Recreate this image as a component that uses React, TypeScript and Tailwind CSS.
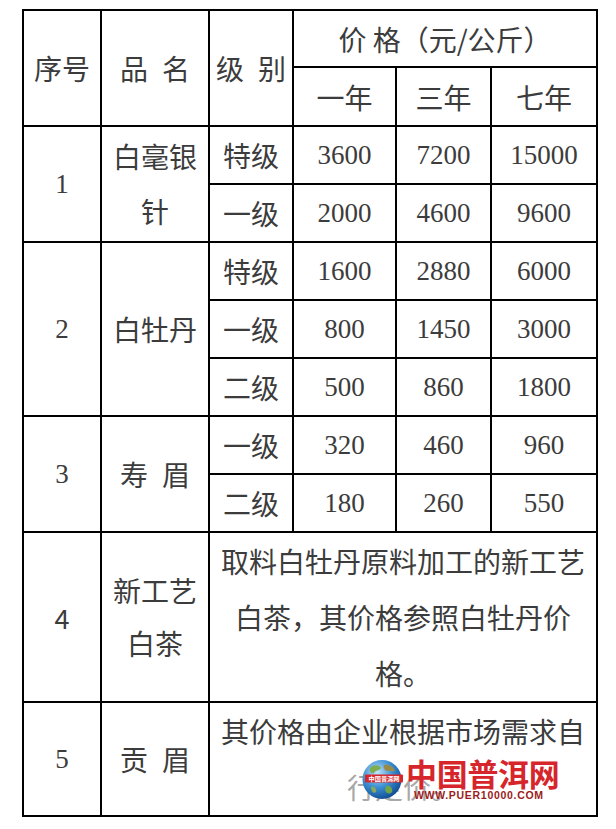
import React from "react";

const cjk = { fontFamily: '"Noto Sans CJK SC", "Noto Sans", sans-serif' };

function Globe() {
  return (
    <svg width="42" height="41" viewBox="0 0 42 41">
      <defs>
        <radialGradient id="gl" cx="38%" cy="32%" r="70%">
          <stop offset="0" stopColor="#bfe4fb" />
          <stop offset="0.55" stopColor="#3b8fd3" />
          <stop offset="1" stopColor="#124f95" />
        </radialGradient>
      </defs>
      <circle cx="20" cy="20.5" r="19.5" fill="url(#gl)" />
      <path d="M8 9 C12 5 17 6 19 9 C17 12 13 11 12 14 C10 15 7 13 8 9 Z" fill="#7fae4e" />
      <path d="M22 6 C27 5 32 8 33 12 C30 13 27 11 24 12 C22 10 21 8 22 6 Z" fill="#9a8a4a" />
      <path d="M24 27 C28 26 31 29 30 33 C27 36 24 34 23 31 Z" fill="#6fa447" />
      <path d="M9 28 C12 27 15 29 14 33 C12 35 9 33 9 28 Z" fill="#8aa85a" />
      <rect x="3" y="15.5" width="38" height="8" rx="1" fill="#d7262b" />
      <text x="22" y="21.8" textAnchor="middle" fontSize="6.2" fontWeight="700" fill="#ffffff" style={cjk}>
        中国普洱网
      </text>
    </svg>
  );
}

export default function App() {
  const td = "border-2 border-black text-center align-middle p-0";
  const zh = "text-[28px] text-[#3c3c3c] font-normal";
  const num = "text-[27px] text-[#3c3c3c] font-['Liberation_Serif','DejaVu_Serif',serif]";

  const priceRow = (lvl: string, a: string, b: string, c: string) => (
    <>
      <td className={`${td} ${zh} h-[58px]`}>{lvl}</td>
      <td className={`${td} ${num}`}>{a}</td>
      <td className={`${td} ${num}`}>{b}</td>
      <td className={`${td} ${num}`}>{c}</td>
    </>
  );

  return (
    <div className="relative w-[616px] h-[829px] bg-white pt-[9px] pl-[22px]" style={cjk}>
      <table className="border-collapse table-fixed w-[576px] leading-none">
        <colgroup>
          <col className="w-[78px]" />
          <col className="w-[108px]" />
          <col className="w-[84px]" />
          <col className="w-[103px]" />
          <col className="w-[95px]" />
          <col className="w-[106px]" />
        </colgroup>
        <tbody>
          <tr>
            <td rowSpan={2} className={`${td} ${zh}`}>序号</td>
            <td rowSpan={2} className={`${td} ${zh}`}>品{"\u2002"}名</td>
            <td rowSpan={2} className={`${td} ${zh}`}>级{"\u2002"}别</td>
            <td colSpan={3} className={`${td} ${zh} h-[57px]`}>价 格（元/公斤）</td>
          </tr>
          <tr>
            <td className={`${td} ${zh} h-[59px]`}>一年</td>
            <td className={`${td} ${zh}`}>三年</td>
            <td className={`${td} ${zh}`}>七年</td>
          </tr>
          <tr>
            <td rowSpan={2} className={`${td} ${num}`}>1</td>
            <td rowSpan={2} className={`${td} ${zh} leading-[55px]`}>
              <div>白毫银</div>
              <div>针</div>
            </td>
            {priceRow("特级", "3600", "7200", "15000")}
          </tr>
          <tr>{priceRow("一级", "2000", "4600", "9600")}</tr>
          <tr>
            <td rowSpan={3} className={`${td} ${num}`}>2</td>
            <td rowSpan={3} className={`${td} ${zh}`}>白牡丹</td>
            {priceRow("特级", "1600", "2880", "6000")}
          </tr>
          <tr>{priceRow("一级", "800", "1450", "3000")}</tr>
          <tr>{priceRow("二级", "500", "860", "1800")}</tr>
          <tr>
            <td rowSpan={2} className={`${td} ${num}`}>3</td>
            <td rowSpan={2} className={`${td} ${zh}`}>寿{"\u2002"}眉</td>
            {priceRow("一级", "320", "460", "960")}
          </tr>
          <tr>{priceRow("二级", "180", "260", "550")}</tr>
          <tr>
            <td className={`${td} text-[27px] text-[#3c3c3c] h-[170px]`}>4</td>
            <td className={`${td} ${zh} leading-[53px]`}>
              <div>新工艺</div>
              <div>白茶</div>
            </td>
            <td colSpan={4} className={`${td} ${zh} leading-[56px] whitespace-nowrap`}>
              <div>取料白牡丹原料加工的新工艺</div>
              <div>白茶，其价格参照白牡丹价</div>
              <div>格。</div>
            </td>
          </tr>
          <tr>
            <td className={`${td} ${num} h-[114px]`}>5</td>
            <td className={`${td} ${zh}`}>贡{"\u2002"}眉</td>
            <td colSpan={4} className={`${td} ${zh} leading-[56px] whitespace-nowrap`}>
              <div>其价格由企业根据市场需求自</div>
              <div className="text-[#a8a8a8]">行定价。</div>
            </td>
          </tr>
        </tbody>
      </table>

      <div className="absolute left-[362px] top-[759px] flex items-start">
        <Globe />
        <div className="ml-[2px] flex flex-col">
          <span className="text-[31px] leading-[28px] font-bold text-[#d7262b] tracking-[-0.3px]">
            中国普洱网
          </span>
          <span className="ml-[8px] mt-[3px] text-[10.5px] leading-none font-bold text-[#9b1b20] tracking-[0.7px] font-['Liberation_Sans',Arial,sans-serif]">
            WWW.PUER10000.COM
          </span>
        </div>
      </div>
    </div>
  );
}
